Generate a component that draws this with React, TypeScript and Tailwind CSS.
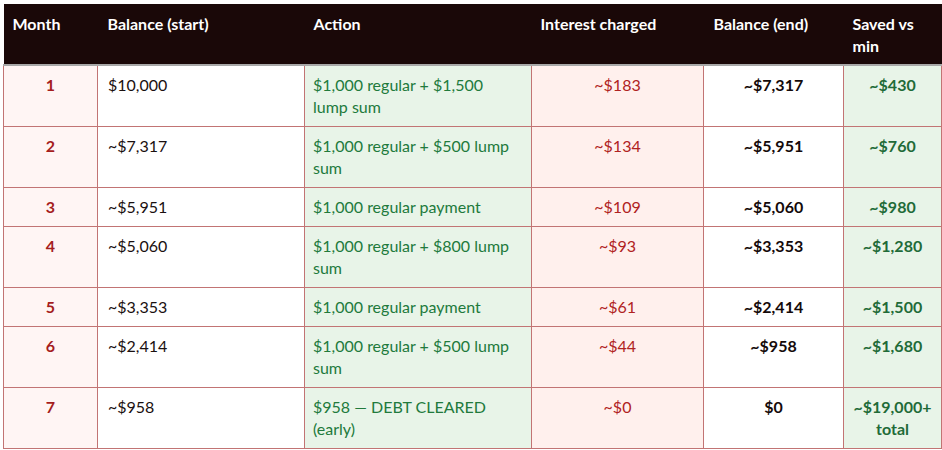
import React from 'react';

type Row = {
  month: string;
  start: string;
  action: React.ReactNode;
  interest: string;
  end: string;
  saved: React.ReactNode;
};

const rows: Row[] = [
  { month: '1', start: '$10,000', action: <>$1,000 regular + $1,500<br />lump sum</>, interest: '~$183', end: '~$7,317', saved: '~$430' },
  { month: '2', start: '~$7,317', action: <>$1,000 regular + $500 lump<br />sum</>, interest: '~$134', end: '~$5,951', saved: '~$760' },
  { month: '3', start: '~$5,951', action: '$1,000 regular payment', interest: '~$109', end: '~$5,060', saved: '~$980' },
  { month: '4', start: '~$5,060', action: <>$1,000 regular + $800 lump<br />sum</>, interest: '~$93', end: '~$3,353', saved: '~$1,280' },
  { month: '5', start: '~$3,353', action: '$1,000 regular payment', interest: '~$61', end: '~$2,414', saved: '~$1,500' },
  { month: '6', start: '~$2,414', action: <>$1,000 regular + $500 lump<br />sum</>, interest: '~$44', end: '~$958', saved: '~$1,680' },
  { month: '7', start: '~$958', action: <>$958 — DEBT CLEARED<br />(early)</>, interest: '~$0', end: '$0', saved: <>~$19,000+<br />total</> },
];

const cell = 'border border-[#c27474] align-top pt-[8px] pb-[8px] leading-[22px] whitespace-nowrap';

export default function App() {
  return (
    <div className="bg-white w-[942px] h-[450px] pt-[4px] pl-[3px] font-['Lato','Liberation_Sans',sans-serif] text-[16px]">
      <table className="border-collapse table-fixed w-[938px]">
        <colgroup>
          <col className="w-[94px]" />
          <col className="w-[207px]" />
          <col className="w-[227px]" />
          <col className="w-[172px]" />
          <col className="w-[140px]" />
          <col className="w-[98px]" />
        </colgroup>
        <thead>
          <tr className="bg-[#1a0808] text-white font-bold h-[61px] border-b-2 border-[#a8a8a8]">
            <th className="text-left align-top pt-[9px] pl-[9px] leading-[22px]">Month</th>
            <th className="text-left align-top pt-[9px] pl-[10px] leading-[22px]">Balance (start)</th>
            <th className="text-left align-top pt-[9px] pl-[9px] leading-[22px]">Action</th>
            <th className="text-left align-top pt-[9px] pl-[9px] leading-[22px]">Interest charged</th>
            <th className="text-left align-top pt-[9px] pl-[10px] leading-[22px]">Balance (end)</th>
            <th className="text-left align-top pt-[9px] pl-[9px] leading-[22px]">Saved vs<br />min</th>
          </tr>
        </thead>
        <tbody>
          {rows.map((r) => (
            <tr key={r.month}>
              <td className={`${cell} bg-[#fff5f4] text-center font-bold text-[#a51d1d]`}>{r.month}</td>
              <td className={`${cell} bg-white pl-[10px] text-[#1a1010]`}>{r.start}</td>
              <td className={`${cell} bg-[#e8f4e8] pl-[8px] text-[#217a3c]`}>{r.action}</td>
              <td className={`${cell} bg-[#fff0ed] text-center text-[#b02222]`}>{r.interest}</td>
              <td className={`${cell} bg-white text-center font-bold text-[#140a0a]`}>{r.end}</td>
              <td className={`${cell} bg-[#e8f4e8] text-center font-bold text-[#1f6b38]`}>{r.saved}</td>
            </tr>
          ))}
        </tbody>
      </table>
    </div>
  );
}
